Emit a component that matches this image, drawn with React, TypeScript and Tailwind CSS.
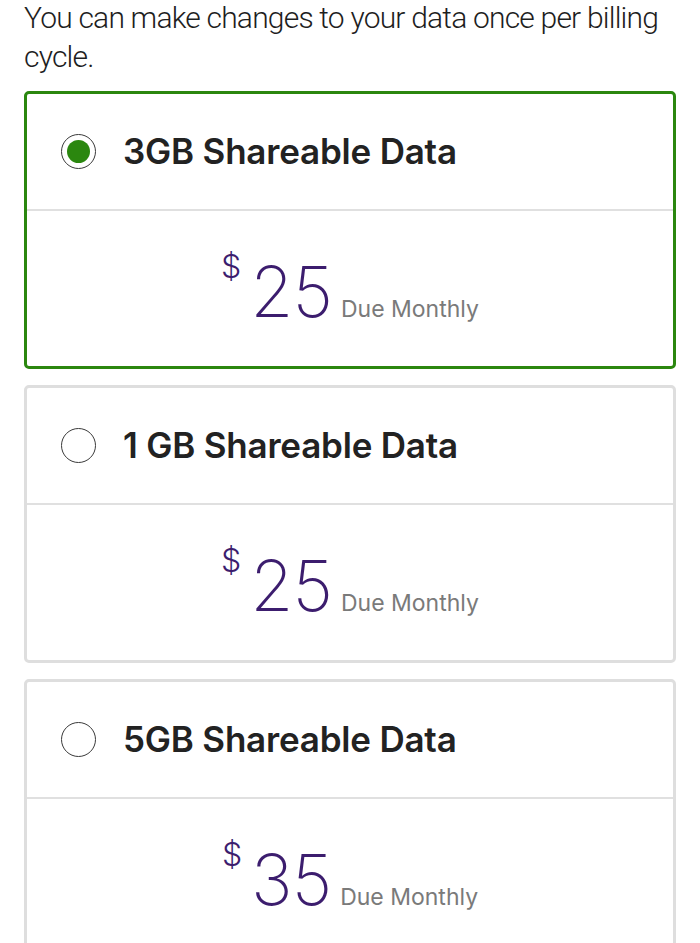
import React from "react";

type Plan = { title: string; price: string; selected: boolean };

const plans: Plan[] = [
  { title: "3GB Shareable Data", price: "25", selected: true },
  { title: "1 GB Shareable Data", price: "25", selected: false },
  { title: "5GB Shareable Data", price: "35", selected: false },
];

function Radio({ selected }: { selected: boolean }) {
  return (
    <div className="w-[35px] h-[35px] rounded-full border-[1.5px] border-[#3a3a3a] flex items-center justify-center bg-white">
      {selected && <div className="w-[23px] h-[23px] rounded-full bg-[#2b870f]" />}
    </div>
  );
}

function PlanCard({ plan }: { plan: Plan }) {
  return (
    <div
      className={
        plan.selected
          ? "border-[3px] border-[#2b870f] rounded-[5px] bg-white"
          : "border-[3px] border-[#dedede] rounded-[5px] bg-white"
      }
    >
      <div className="h-[117px] flex items-center pl-[34px] gap-[27px] border-b-2 border-[#e0e0e0]">
        <Radio selected={plan.selected} />
        <span
          className="text-[35px] font-semibold text-[#222] tracking-[-0.2px]"
          style={{ fontFamily: "Inter, 'Liberation Sans', sans-serif" }}
        >
          {plan.title}
        </span>
      </div>
      <div className="h-[155px] flex justify-center items-start pt-[36px]">
        <div className="flex items-baseline" style={{ fontFamily: "Inter, 'Liberation Sans', sans-serif" }}>
          <span className="self-start text-[32px] font-light text-[#3c1d6e] leading-none mt-[4px] mr-[9px]">$</span>
          <span className="text-[70px] font-extralight text-[#3c1d6e] leading-none mt-[10px] tracking-[-1px]">{plan.price}</span>
          <span className="text-[23px] font-normal text-[#7a7a7a] leading-none ml-[9px]">Due Monthly</span>
        </div>
      </div>
    </div>
  );
}

export default function App() {
  return (
    <div className="bg-white min-h-screen px-6 overflow-hidden">
      <p
        className="text-[30px] leading-[39px] font-light text-[#1e1e1e] tracking-[-0.8px] mt-[-2px] mb-[15px]"
        style={{ fontFamily: "Roboto, 'Liberation Sans', sans-serif" }}
      >
        You can make changes to your data once per billing cycle.
      </p>
      <div className="flex flex-col gap-[16px]">
        {plans.map((p, i) => (
          <PlanCard key={i} plan={p} />
        ))}
      </div>
    </div>
  );
}
